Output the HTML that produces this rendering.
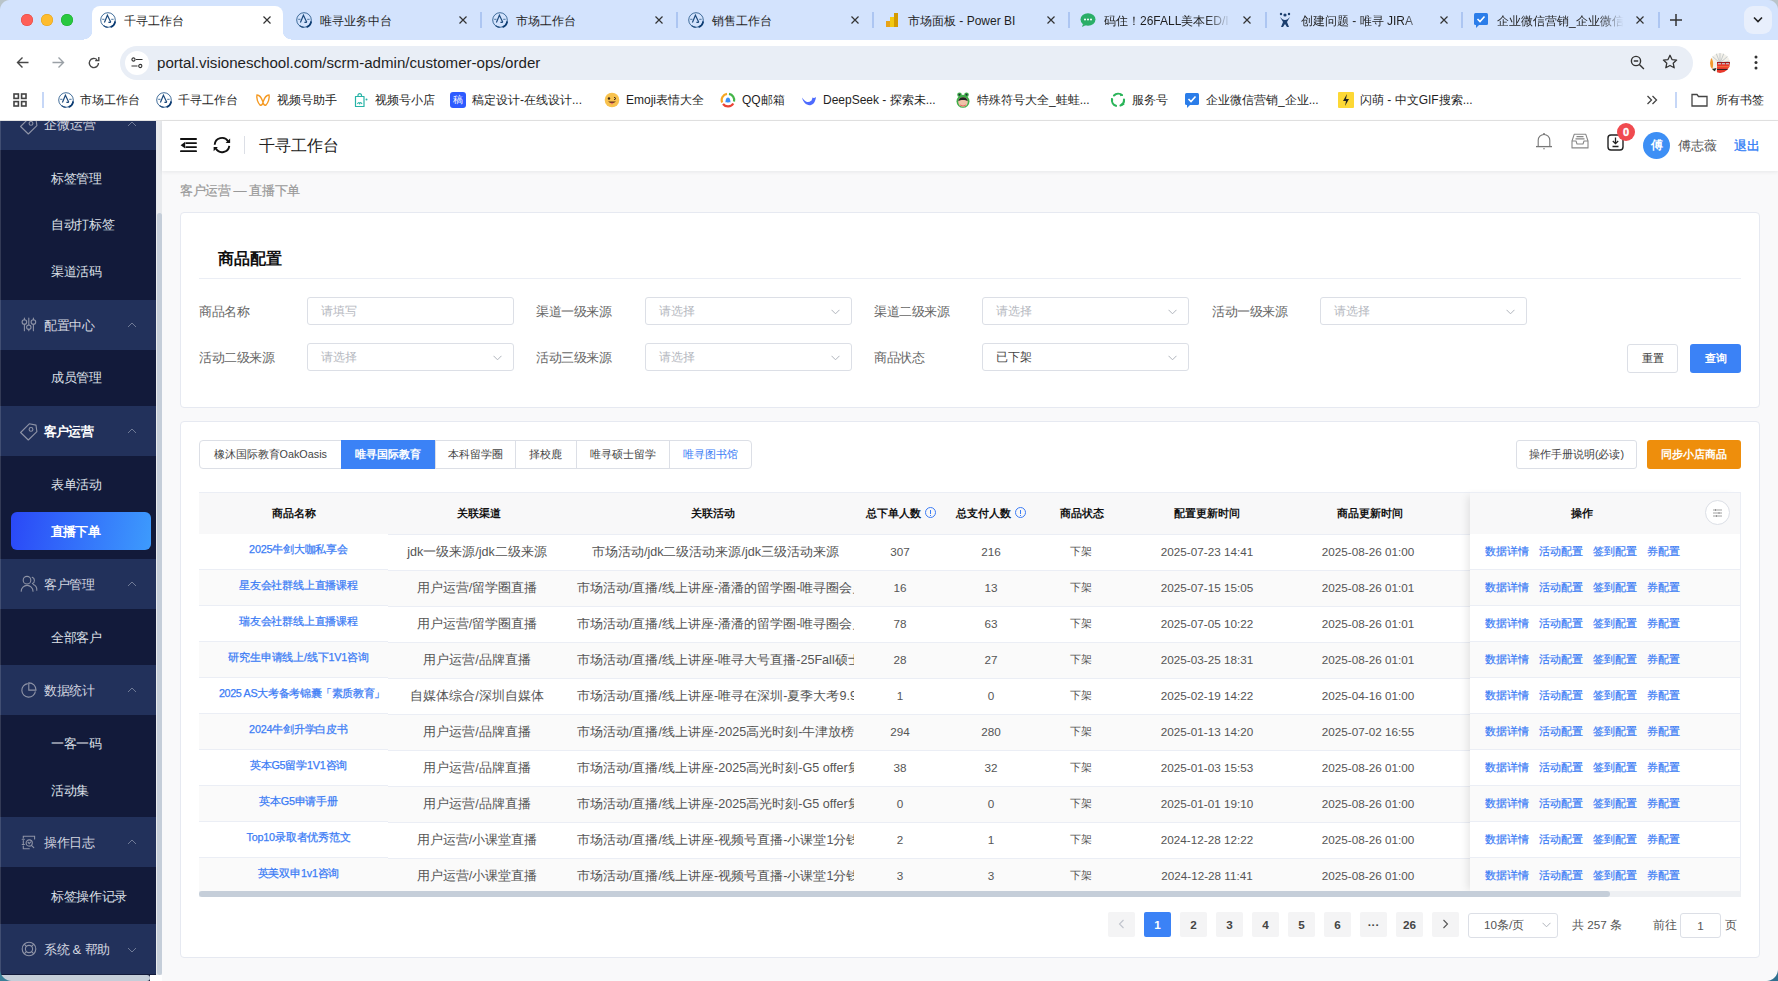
<!DOCTYPE html><html><head><meta charset="utf-8"><style>
*{box-sizing:border-box;margin:0;padding:0}
html,body{width:1778px;height:981px;overflow:hidden;background:#fff;font-family:"Liberation Sans",sans-serif;}
.a{position:absolute}
.t{position:absolute;white-space:nowrap;line-height:1}
</style></head><body>
<div class="a" style="left:0;top:0;width:1778px;height:40px;background:#d3e3fd"></div>
<div class="a" style="left:0;top:40px;width:1778px;height:80px;background:#fff"></div>
<div class="a" style="left:21px;top:14px;width:12px;height:12px;border-radius:50%;background:#fe5f57;box-shadow:inset 0 0 0 0.5px #e2463f"></div>
<div class="a" style="left:41px;top:14px;width:12px;height:12px;border-radius:50%;background:#febc2e;box-shadow:inset 0 0 0 0.5px #e1a116"></div>
<div class="a" style="left:61px;top:14px;width:12px;height:12px;border-radius:50%;background:#28c840;box-shadow:inset 0 0 0 0.5px #1aab29"></div>
<div class="a" style="left:92px;top:6px;width:191px;height:34px;background:#fff;border-radius:8px 8px 0 0"></div>
<div class="a" style="left:84px;top:31px;width:8px;height:9px;background:radial-gradient(circle at 0 0,#d3e3fd 8px,#fff 8.5px)"></div>
<div class="a" style="left:283px;top:31px;width:8px;height:9px;background:radial-gradient(circle at 100% 0,#d3e3fd 8px,#fff 8.5px)"></div>
<svg class="a" style="left:100px;top:12px" width="16" height="16" viewBox="0 0 16 16"><circle cx="8" cy="8" r="7.3" fill="none" stroke="#2f5f90" stroke-width="0.9"/><path d="M15.2 9.3A7.3 7.3 0 0 1 10.6 15.1" fill="none" stroke="#0b3b72" stroke-width="1.8"/><path d="M3.6 13.6A7.3 7.3 0 0 0 7.6 15.4" fill="none" stroke="#1d4a7c" stroke-width="1.2"/><path d="M4.4 10.4L7.4 3.2L10.8 10.3M8.4 10.3h2.4" fill="none" stroke="#1d4a7c" stroke-width="1.2"/><path d="M2.2 7.3h2.3M11.2 7.3h2.4" stroke="#4d76a0" stroke-width="1"/></svg>
<div class="t" style="left:124px;top:15px;font-size:12px;color:#1f1f1f">千寻工作台</div>
<svg class="a" style="left:263px;top:16px" width="8" height="8" viewBox="0 0 8 8"><path d="M0.5 0.5l7 7M7.5 0.5l-7 7" stroke="#333" stroke-width="1.2"/></svg>
<svg class="a" style="left:296px;top:12px" width="16" height="16" viewBox="0 0 16 16"><circle cx="8" cy="8" r="7.3" fill="none" stroke="#2f5f90" stroke-width="0.9"/><path d="M15.2 9.3A7.3 7.3 0 0 1 10.6 15.1" fill="none" stroke="#0b3b72" stroke-width="1.8"/><path d="M3.6 13.6A7.3 7.3 0 0 0 7.6 15.4" fill="none" stroke="#1d4a7c" stroke-width="1.2"/><path d="M4.4 10.4L7.4 3.2L10.8 10.3M8.4 10.3h2.4" fill="none" stroke="#1d4a7c" stroke-width="1.2"/><path d="M2.2 7.3h2.3M11.2 7.3h2.4" stroke="#4d76a0" stroke-width="1"/></svg>
<div class="t" style="left:320px;top:15px;font-size:12px;color:#1f1f1f">唯寻业务中台</div>
<svg class="a" style="left:459px;top:16px" width="8" height="8" viewBox="0 0 8 8"><path d="M0.5 0.5l7 7M7.5 0.5l-7 7" stroke="#333" stroke-width="1.2"/></svg>
<svg class="a" style="left:492px;top:12px" width="16" height="16" viewBox="0 0 16 16"><circle cx="8" cy="8" r="7.3" fill="none" stroke="#2f5f90" stroke-width="0.9"/><path d="M15.2 9.3A7.3 7.3 0 0 1 10.6 15.1" fill="none" stroke="#0b3b72" stroke-width="1.8"/><path d="M3.6 13.6A7.3 7.3 0 0 0 7.6 15.4" fill="none" stroke="#1d4a7c" stroke-width="1.2"/><path d="M4.4 10.4L7.4 3.2L10.8 10.3M8.4 10.3h2.4" fill="none" stroke="#1d4a7c" stroke-width="1.2"/><path d="M2.2 7.3h2.3M11.2 7.3h2.4" stroke="#4d76a0" stroke-width="1"/></svg>
<div class="t" style="left:516px;top:15px;font-size:12px;color:#1f1f1f">市场工作台</div>
<svg class="a" style="left:655px;top:16px" width="8" height="8" viewBox="0 0 8 8"><path d="M0.5 0.5l7 7M7.5 0.5l-7 7" stroke="#333" stroke-width="1.2"/></svg>
<div class="a" style="left:480px;top:12px;width:2px;height:16px;background:#adc6f2"></div>
<svg class="a" style="left:688px;top:12px" width="16" height="16" viewBox="0 0 16 16"><circle cx="8" cy="8" r="7.3" fill="none" stroke="#2f5f90" stroke-width="0.9"/><path d="M15.2 9.3A7.3 7.3 0 0 1 10.6 15.1" fill="none" stroke="#0b3b72" stroke-width="1.8"/><path d="M3.6 13.6A7.3 7.3 0 0 0 7.6 15.4" fill="none" stroke="#1d4a7c" stroke-width="1.2"/><path d="M4.4 10.4L7.4 3.2L10.8 10.3M8.4 10.3h2.4" fill="none" stroke="#1d4a7c" stroke-width="1.2"/><path d="M2.2 7.3h2.3M11.2 7.3h2.4" stroke="#4d76a0" stroke-width="1"/></svg>
<div class="t" style="left:712px;top:15px;font-size:12px;color:#1f1f1f">销售工作台</div>
<svg class="a" style="left:851px;top:16px" width="8" height="8" viewBox="0 0 8 8"><path d="M0.5 0.5l7 7M7.5 0.5l-7 7" stroke="#333" stroke-width="1.2"/></svg>
<div class="a" style="left:676px;top:12px;width:2px;height:16px;background:#adc6f2"></div>
<svg class="a" style="left:884px;top:12px" width="16" height="16" viewBox="0 0 16 16"><rect x="2" y="9" width="4" height="6" fill="#e8a317"/><rect x="6" y="5" width="4" height="10" fill="#f2c811"/><rect x="10" y="1" width="4" height="14" fill="#d49a00"/></svg>
<div class="t" style="left:908px;top:15px;font-size:12px;color:#1f1f1f">市场面板 - Power BI</div>
<svg class="a" style="left:1047px;top:16px" width="8" height="8" viewBox="0 0 8 8"><path d="M0.5 0.5l7 7M7.5 0.5l-7 7" stroke="#333" stroke-width="1.2"/></svg>
<div class="a" style="left:872px;top:12px;width:2px;height:16px;background:#adc6f2"></div>
<svg class="a" style="left:1080px;top:12px" width="16" height="16" viewBox="0 0 16 16"><ellipse cx="8" cy="7.5" rx="7.5" ry="6.2" fill="#2aae67"/><path d="M3 12l-1 3 4-2z" fill="#2aae67"/><circle cx="5" cy="7.5" r="1" fill="#fff"/><circle cx="8" cy="7.5" r="1" fill="#fff"/><circle cx="11" cy="7.5" r="1" fill="#fff"/></svg>
<div class="t" style="left:1104px;top:15px;width:127px;overflow:hidden;padding-bottom:3px;font-size:12px;color:#1f1f1f;-webkit-mask-image:linear-gradient(90deg,#000 80%,transparent)">码住！26FALL美本ED/I</div>
<svg class="a" style="left:1243px;top:16px" width="8" height="8" viewBox="0 0 8 8"><path d="M0.5 0.5l7 7M7.5 0.5l-7 7" stroke="#333" stroke-width="1.2"/></svg>
<div class="a" style="left:1068px;top:12px;width:2px;height:16px;background:#adc6f2"></div>
<svg class="a" style="left:1277px;top:12px" width="16" height="16" viewBox="0 0 16 16"><circle cx="8" cy="3" r="1.6" fill="#1c3f6e"/><circle cx="4" cy="2" r="1.2" fill="#1c3f6e"/><circle cx="12" cy="2" r="1.2" fill="#1c3f6e"/><path d="M3 5c2 2 3 3 5 3s3-1 5-3l-3 5 2 5H10l-2-3-2 3H4l2-5z" fill="#1c3f6e"/></svg>
<div class="t" style="left:1301px;top:15px;width:127px;overflow:hidden;padding-bottom:3px;font-size:12px;color:#1f1f1f;-webkit-mask-image:linear-gradient(90deg,#000 80%,transparent)">创建问题 - 唯寻 JIRA</div>
<svg class="a" style="left:1440px;top:16px" width="8" height="8" viewBox="0 0 8 8"><path d="M0.5 0.5l7 7M7.5 0.5l-7 7" stroke="#333" stroke-width="1.2"/></svg>
<div class="a" style="left:1265px;top:12px;width:2px;height:16px;background:#adc6f2"></div>
<svg class="a" style="left:1473px;top:12px" width="16" height="16" viewBox="0 0 16 16"><rect x="1" y="1" width="14" height="12" rx="1.5" fill="#2b7de9"/><path d="M3 13l0 3 3-3z" fill="#2b7de9"/><path d="M4.5 7l2.5 2.5 4.5-5" stroke="#fff" stroke-width="1.6" fill="none"/></svg>
<div class="t" style="left:1497px;top:15px;width:127px;overflow:hidden;padding-bottom:3px;font-size:12px;color:#1f1f1f;-webkit-mask-image:linear-gradient(90deg,#000 80%,transparent)">企业微信营销_企业微信</div>
<svg class="a" style="left:1636px;top:16px" width="8" height="8" viewBox="0 0 8 8"><path d="M0.5 0.5l7 7M7.5 0.5l-7 7" stroke="#333" stroke-width="1.2"/></svg>
<div class="a" style="left:1461px;top:12px;width:2px;height:16px;background:#adc6f2"></div>
<div class="a" style="left:1658px;top:12px;width:2px;height:16px;background:#adc6f2"></div>
<svg class="a" style="left:1669px;top:13px" width="14" height="14" viewBox="0 0 14 14"><path d="M7 1v12M1 7h12" stroke="#333" stroke-width="1.5"/></svg>
<div class="a" style="left:1744px;top:6px;width:28px;height:28px;border-radius:9px;background:#e8effc"></div>
<svg class="a" style="left:1753px;top:16px" width="10" height="8" viewBox="0 0 10 8"><path d="M1 1.5l4 4 4-4" stroke="#222" stroke-width="1.6" fill="none"/></svg>
<svg class="a" style="left:16px;top:56px" width="13" height="13" viewBox="0 0 13 13"><path d="M12.5 6.5H1.5M6.5 1.5l-5 5 5 5" stroke="#474747" stroke-width="1.4" fill="none"/></svg>
<svg class="a" style="left:52px;top:56px" width="13" height="13" viewBox="0 0 13 13"><path d="M0.5 6.5h11M6.5 1.5l5 5-5 5" stroke="#9aa0a6" stroke-width="1.4" fill="none"/></svg>
<svg class="a" style="left:87px;top:56px" width="14" height="14" viewBox="0 0 14 14"><path d="M11.5 7a4.6 4.6 0 1 1-1.4-3.3" stroke="#474747" stroke-width="1.4" fill="none"/><path d="M11.8 1v3.6H8.2" stroke="#474747" stroke-width="1.4" fill="none"/></svg>
<div class="a" style="left:120px;top:46px;width:1573px;height:34px;border-radius:17px;background:#e9eef6"></div>
<div class="a" style="left:125px;top:51px;width:24px;height:24px;border-radius:50%;background:#fff"></div>
<svg class="a" style="left:131px;top:57px" width="12" height="12" viewBox="0 0 12 12"><circle cx="2.5" cy="2.5" r="1.6" fill="none" stroke="#333" stroke-width="1.1"/><path d="M5 2.5h6.5M0.5 9h6" stroke="#333" stroke-width="1.2"/><circle cx="9.3" cy="9" r="1.6" fill="none" stroke="#333" stroke-width="1.1"/></svg>
<div class="t" style="left:157px;top:55px;font-size:15.1px;color:#1f1f1f">portal.visioneschool.com/scrm-admin/customer-ops/order</div>
<svg class="a" style="left:1630px;top:55px" width="15" height="15" viewBox="0 0 15 15"><circle cx="6" cy="6" r="4.6" fill="none" stroke="#333" stroke-width="1.4"/><path d="M9.4 9.4l4.5 4.5M3.8 6h4.4" stroke="#333" stroke-width="1.4"/></svg>
<svg class="a" style="left:1662px;top:54px" width="16" height="16" viewBox="0 0 16 16"><path d="M8 1.3l2 4.3 4.6.5-3.4 3.1 1 4.6L8 11.5l-4.2 2.3 1-4.6L1.4 6.1 6 5.6z" fill="none" stroke="#333" stroke-width="1.3" stroke-linejoin="round"/></svg>
<svg class="a" style="left:1710px;top:53px" width="20" height="20" viewBox="0 0 20 20"><defs><clipPath id="av"><circle cx="10" cy="10" r="10"/></clipPath></defs><g clip-path="url(#av)"><rect width="20" height="20" fill="#f3f1ea"/><g stroke="#b9c0c4" stroke-width="0.8"><path d="M10 10L6 0M10 10L10 0M10 10L14 0M10 10L18 3M10 10L20 8M10 10L2 3"/></g><path d="M0 4C4 6 4 14 1 19L-1 19z" fill="#f29a2e"/><path d="M6.5 15L4 20H0L2 16z" fill="#1d2a1f"/><rect x="7" y="9" width="13" height="11" fill="#e8392c"/><rect x="7" y="9" width="13" height="1.3" fill="#9b1c1c"/><path d="M8 10.8h3M12 10.8h3M16 10.8h3" stroke="#bfe1f0" stroke-width="1.1"/><rect x="7" y="13" width="13" height="1.3" fill="#f26b3a"/><path d="M7 16.5h12" stroke="#3a1e1e" stroke-width="1.2"/></g></svg>
<svg class="a" style="left:1754px;top:55px" width="4" height="15" viewBox="0 0 4 15"><circle cx="2" cy="2" r="1.5" fill="#333"/><circle cx="2" cy="7.5" r="1.5" fill="#333"/><circle cx="2" cy="13" r="1.5" fill="#333"/></svg>
<svg class="a" style="left:13px;top:93px" width="14" height="14" viewBox="0 0 14 14"><g fill="none" stroke="#444" stroke-width="1.6"><rect x="1" y="1" width="4.4" height="4.4"/><rect x="8.6" y="1" width="4.4" height="4.4"/><rect x="1" y="8.6" width="4.4" height="4.4"/><rect x="8.6" y="8.6" width="4.4" height="4.4"/></g></svg>
<div class="a" style="left:42px;top:92px;width:2px;height:16px;background:#c6d7f7"></div>
<svg class="a" style="left:58px;top:92px" width="16" height="16" viewBox="0 0 16 16"><circle cx="8" cy="8" r="7.3" fill="none" stroke="#2f5f90" stroke-width="0.9"/><path d="M15.2 9.3A7.3 7.3 0 0 1 10.6 15.1" fill="none" stroke="#0b3b72" stroke-width="1.8"/><path d="M3.6 13.6A7.3 7.3 0 0 0 7.6 15.4" fill="none" stroke="#1d4a7c" stroke-width="1.2"/><path d="M4.4 10.4L7.4 3.2L10.8 10.3M8.4 10.3h2.4" fill="none" stroke="#1d4a7c" stroke-width="1.2"/><path d="M2.2 7.3h2.3M11.2 7.3h2.4" stroke="#4d76a0" stroke-width="1"/></svg>
<div class="t" style="left:80px;top:94px;font-size:12px;color:#1f1f1f">市场工作台</div>
<svg class="a" style="left:156px;top:92px" width="16" height="16" viewBox="0 0 16 16"><circle cx="8" cy="8" r="7.3" fill="none" stroke="#2f5f90" stroke-width="0.9"/><path d="M15.2 9.3A7.3 7.3 0 0 1 10.6 15.1" fill="none" stroke="#0b3b72" stroke-width="1.8"/><path d="M3.6 13.6A7.3 7.3 0 0 0 7.6 15.4" fill="none" stroke="#1d4a7c" stroke-width="1.2"/><path d="M4.4 10.4L7.4 3.2L10.8 10.3M8.4 10.3h2.4" fill="none" stroke="#1d4a7c" stroke-width="1.2"/><path d="M2.2 7.3h2.3M11.2 7.3h2.4" stroke="#4d76a0" stroke-width="1"/></svg>
<div class="t" style="left:178px;top:94px;font-size:12px;color:#1f1f1f">千寻工作台</div>
<svg class="a" style="left:255px;top:92px" width="16" height="16" viewBox="0 0 16 16"><path d="M2 3c3 0 5 4 6 7 1-3 3-7 6-7 1 3-1 8-3 10-2 1-3-2-3-3 0 1-1 4-3 3C3 11 1 6 2 3z" fill="none" stroke="#f59a23" stroke-width="1.4"/></svg>
<div class="t" style="left:277px;top:94px;font-size:12px;color:#1f1f1f">视频号助手</div>
<svg class="a" style="left:353px;top:92px" width="16" height="16" viewBox="0 0 16 16"><g fill="none" stroke="#27b3a6" stroke-width="1.2" stroke-linejoin="round"><path d="M2.5 4.5h8.5v10H2.5z"/><path d="M5 4.5V3a1.8 1.8 0 0 1 3.5 0v1.5"/><path d="M4.5 12c1-2 2-2 2.2 0 .3-2 1.3-2 2.3 0"/></g><circle cx="13.5" cy="7.5" r="1" fill="#27b3a6"/></svg>
<div class="t" style="left:375px;top:94px;font-size:12px;color:#1f1f1f">视频号小店</div>
<div class="a" style="left:450px;top:92px;width:16px;height:16px;border-radius:3px;background:#2e5bff;color:#fff;font-size:10px;line-height:16px;text-align:center">稿</div>
<div class="t" style="left:472px;top:94px;font-size:12px;color:#1f1f1f">稿定设计-在线设计...</div>
<svg class="a" style="left:604px;top:92px" width="16" height="16" viewBox="0 0 16 16"><circle cx="8" cy="8" r="7.3" fill="#f8c24e"/><circle cx="5" cy="6.5" r="1.2" fill="#3b2a1a"/><path d="M10 5.2l2 1.3-2 1.3" stroke="#3b2a1a" stroke-width="1" fill="none"/><path d="M4 9.5q4 3.5 8 0z" fill="#5a2a1a"/><path d="M6.5 10.8q1.5 3 3 0z" fill="#f2706e"/></svg>
<div class="t" style="left:626px;top:94px;font-size:12px;color:#1f1f1f">Emoji表情大全</div>
<svg class="a" style="left:720px;top:92px" width="16" height="16" viewBox="0 0 16 16"><g fill="none" stroke-width="2.2"><path d="M2.2 10.5A6.3 6.3 0 0 1 7 1.8" stroke="#f6a623"/><path d="M9 1.8A6.3 6.3 0 0 1 14 9.5" stroke="#44b549"/><path d="M13.3 11.5A6.3 6.3 0 0 1 3 12" stroke="#ea4335"/></g><path d="M5.5 10.5c0-2 .5-5 2.5-5s2.5 3 2.5 5c-.8-.4-1.5-.2-2.5 .2-1-.4-1.7-.6-2.5-.2z" fill="#3b8ff5"/></svg>
<div class="t" style="left:742px;top:94px;font-size:12px;color:#1f1f1f">QQ邮箱</div>
<svg class="a" style="left:801px;top:92px" width="16" height="16" viewBox="0 0 16 16"><path d="M1 5.5c1 5 5 8.5 9 7.5 3-.8 4.5-4 5-8-1.2 1-2.5 1.2-3.5 .5-.3 3-2.5 5-5.5 4.5C4 9.5 2.5 7.5 1 5.5z" fill="#4d6bfe"/><path d="M6.5 6.5c1 1.5 2.5 2 4 1.5" stroke="#fff" stroke-width="1" fill="none"/></svg>
<div class="t" style="left:823px;top:94px;font-size:12px;color:#1f1f1f">DeepSeek - 探索未...</div>
<svg class="a" style="left:955px;top:92px" width="16" height="16" viewBox="0 0 16 16"><circle cx="4.5" cy="2.8" r="2.3" fill="#3fae49"/><circle cx="11.5" cy="2.8" r="2.3" fill="#3fae49"/><circle cx="4.5" cy="2.8" r="1" fill="#1e2a3a"/><circle cx="11.5" cy="2.8" r="1" fill="#1e2a3a"/><circle cx="8" cy="9.3" r="6.5" fill="#3fae49"/><circle cx="8" cy="10" r="4.8" fill="#f0c2a8"/><path d="M3.3 9a4.8 4.8 0 0 1 9.4 0c-2-1.5-7.4-1.5-9.4 0z" fill="#222"/><path d="M5 13q3 2 6 0" stroke="#e86a6a" stroke-width="1" fill="none"/></svg>
<div class="t" style="left:977px;top:94px;font-size:12px;color:#1f1f1f">特殊符号大全_蛙蛙...</div>
<svg class="a" style="left:1110px;top:92px" width="16" height="16" viewBox="0 0 16 16"><g fill="none" stroke="#2bb55a" stroke-width="2.1" stroke-linecap="round"><path d="M4 3.5A6 6 0 0 1 12 3"/><path d="M14 7.5A6 6 0 0 1 10.5 13.5"/><path d="M6 13.8A6 6 0 0 1 2 7"/></g><path d="M10.5 1l2.5 2.5-3 .8z M14.8 12.5l-3.3 1.5.2-3z M1 9.5l.2-3.5 2.3 2z" fill="#2bb55a"/></svg>
<div class="t" style="left:1132px;top:94px;font-size:12px;color:#1f1f1f">服务号</div>
<svg class="a" style="left:1184px;top:92px" width="16" height="16" viewBox="0 0 16 16"><rect x="1" y="1" width="14" height="12" rx="1.5" fill="#2b7de9"/><path d="M3 13l0 3 3-3z" fill="#2b7de9"/><path d="M4.5 7l2.5 2.5 4.5-5" stroke="#fff" stroke-width="1.6" fill="none"/></svg>
<div class="t" style="left:1206px;top:94px;font-size:12px;color:#1f1f1f">企业微信营销_企业...</div>
<svg class="a" style="left:1338px;top:92px" width="16" height="16" viewBox="0 0 16 16"><rect width="16" height="16" rx="1" fill="#fdd835"/><path d="M9 2L5 9h3l-1 5 4-7H8z" fill="#222"/></svg>
<div class="t" style="left:1360px;top:94px;font-size:12px;color:#1f1f1f">闪萌 - 中文GIF搜索...</div>
<svg class="a" style="left:1646px;top:94px" width="12" height="12" viewBox="0 0 12 12"><path d="M1.5 2l4 4-4 4M6.5 2l4 4-4 4" stroke="#444" stroke-width="1.3" fill="none"/></svg>
<div class="a" style="left:1675px;top:92px;width:2px;height:16px;background:#c6d7f7"></div>
<svg class="a" style="left:1691px;top:93px" width="17" height="14" viewBox="0 0 17 14"><path d="M1 1.5h5l1.5 2H16v9.5H1z" fill="none" stroke="#444" stroke-width="1.3"/></svg>
<div class="t" style="left:1716px;top:94px;font-size:12px;color:#1f1f1f">所有书签</div>
<div class="a" style="left:0;top:120px;width:1778px;height:1px;background:#e3e3e3"></div>
<div class="a" style="left:0;top:121px;width:156px;height:860px;background:#121a3a"></div>
<div class="a" style="left:156px;top:121px;width:6px;height:860px;background:#e8eaed"></div>
<div class="a" style="left:157px;top:213px;width:5px;height:762px;background:#c5ced9;border-radius:3px"></div>
<div class="a" style="left:0;top:975px;width:150px;height:6px;background:#c5ced9;border-radius:0 3px 3px 0"></div>
<div class="a" style="left:150px;top:975px;width:12px;height:6px;background:#fff"></div>
<div class="a" style="left:0;top:121px;width:156px;height:29px;background:#22315b;overflow:hidden"><div class="t" style="left:44px;top:-3px;font-size:13px;color:#d4d7e0">企微运营</div><svg class="a" style="left:20px;top:-5px" width="18" height="19" viewBox="0 0 18 19"><path d="M0.6 10.5L9.3 1.8L16 3.1L16.9 9.6L8.3 18z" fill="none" stroke="#8e93a6" stroke-width="1.1" stroke-linejoin="round"/><circle cx="11" cy="7.4" r="1.9" fill="none" stroke="#8e93a6" stroke-width="1.1"/></svg><svg class="a" style="left:127px;top:0px" width="10" height="6" viewBox="0 0 10 6"><path d="M1 5l4-4 4 4" stroke="#6f7a96" stroke-width="1" fill="none"/></svg></div>
<div class="t" style="left:51px;top:172px;font-size:13px;letter-spacing:-0.35px;color:#dde0e8">标签管理</div>
<div class="t" style="left:51px;top:218px;font-size:13px;letter-spacing:-0.35px;color:#dde0e8">自动打标签</div>
<div class="t" style="left:51px;top:265px;font-size:13px;letter-spacing:-0.35px;color:#dde0e8">渠道活码</div>
<div class="a" style="left:0;top:300px;width:156px;height:50px;background:#22315b"></div>
<div class="t" style="left:44px;top:319px;font-size:13px;letter-spacing:-0.5px;color:#d4d7e0;font-weight:normal">配置中心</div>
<svg class="a" style="left:20px;top:316px" width="18" height="17" viewBox="0 0 18 17"><g fill="none" stroke="#8e93a6" stroke-width="1.1" stroke-linecap="round"><path d="M4.4 2.1v1.6M4.4 8.3v6.5M8.8 2.1v6.8M8.8 13.4v1.4M13.4 2.1v1.6M13.4 8.3v6.5"/><circle cx="4.4" cy="6" r="2.3"/><circle cx="8.8" cy="11.2" r="2.2"/><circle cx="13.4" cy="6" r="2.3"/></g></svg>
<svg class="a" style="left:127px;top:322px" width="10" height="6" viewBox="0 0 10 6"><path d="M1 5l4-4 4 4" stroke="#6f7a96" stroke-width="1" fill="none"/></svg>
<div class="t" style="left:51px;top:371px;font-size:13px;letter-spacing:-0.35px;color:#dde0e8">成员管理</div>
<div class="a" style="left:0;top:406px;width:156px;height:50px;background:#22315b"></div>
<div class="t" style="left:44px;top:425px;font-size:13px;letter-spacing:-0.8px;color:#fff;font-weight:bold">客户运营</div>
<svg class="a" style="left:20px;top:422px" width="18" height="19" viewBox="0 0 18 19"><path d="M0.6 10.5L9.3 1.8L16 3.1L16.9 9.6L8.3 18z" fill="none" stroke="#8e93a6" stroke-width="1.1" stroke-linejoin="round"/><circle cx="11" cy="7.4" r="1.9" fill="none" stroke="#8e93a6" stroke-width="1.1"/></svg>
<svg class="a" style="left:127px;top:428px" width="10" height="6" viewBox="0 0 10 6"><path d="M1 5l4-4 4 4" stroke="#6f7a96" stroke-width="1" fill="none"/></svg>
<div class="t" style="left:51px;top:478px;font-size:13px;letter-spacing:-0.35px;color:#dde0e8">表单活动</div>
<div class="a" style="left:11px;top:512px;width:140px;height:38px;border-radius:6px;background:linear-gradient(100deg,#2a48f7,#3d9bfd)"></div>
<div class="t" style="left:51px;top:525px;font-size:13px;letter-spacing:-0.8px;color:#fff;font-weight:bold">直播下单</div>
<div class="a" style="left:0;top:559px;width:156px;height:50px;background:#22315b"></div>
<div class="t" style="left:44px;top:578px;font-size:13px;letter-spacing:-0.5px;color:#d4d7e0;font-weight:normal">客户管理</div>
<svg class="a" style="left:20px;top:575px" width="18" height="17" viewBox="0 0 18 17"><g fill="none" stroke="#8e93a6" stroke-width="1.1" stroke-linecap="round"><circle cx="7" cy="5.2" r="3.8"/><path d="M1.2 16.3A5.9 5.9 0 0 1 13 16.3"/><path d="M12.2 2.3A3.4 3.4 0 0 1 12.4 8.6"/><path d="M13.3 9.6A5.6 5.6 0 0 1 16.8 15.3"/></g></svg>
<svg class="a" style="left:127px;top:581px" width="10" height="6" viewBox="0 0 10 6"><path d="M1 5l4-4 4 4" stroke="#6f7a96" stroke-width="1" fill="none"/></svg>
<div class="t" style="left:51px;top:631px;font-size:13px;letter-spacing:-0.35px;color:#dde0e8">全部客户</div>
<div class="a" style="left:0;top:665px;width:156px;height:50px;background:#22315b"></div>
<div class="t" style="left:44px;top:684px;font-size:13px;letter-spacing:-0.5px;color:#d4d7e0;font-weight:normal">数据统计</div>
<svg class="a" style="left:20px;top:681px" width="18" height="18" viewBox="0 0 18 18"><g fill="none" stroke="#8e93a6" stroke-width="1.1"><path d="M7.8 2.6A6.8 6.8 0 1 0 15.4 10.3"/><path d="M8.8 1.9V9.1H16A7.1 7.1 0 0 0 8.8 1.9z"/></g></svg>
<svg class="a" style="left:127px;top:687px" width="10" height="6" viewBox="0 0 10 6"><path d="M1 5l4-4 4 4" stroke="#6f7a96" stroke-width="1" fill="none"/></svg>
<div class="t" style="left:51px;top:737px;font-size:13px;letter-spacing:-0.35px;color:#dde0e8">一客一码</div>
<div class="t" style="left:51px;top:784px;font-size:13px;letter-spacing:-0.35px;color:#dde0e8">活动集</div>
<div class="a" style="left:0;top:817px;width:156px;height:50px;background:#22315b"></div>
<div class="t" style="left:44px;top:836px;font-size:13px;letter-spacing:-0.5px;color:#d4d7e0;font-weight:normal">操作日志</div>
<svg class="a" style="left:20px;top:calc(833px + 2px)" width="16" height="16" viewBox="0 0 16 16"><g fill="none" stroke="#8e93a6" stroke-width="1.1" stroke-linecap="round"><path d="M3.3 3V1.2h11.3V4M3.3 5.5v3M3.3 11v2.8h6"/><path d="M2.2 4.2h2.2M2.2 9.5h2.2"/><circle cx="9.2" cy="8" r="3.1"/><path d="M11.4 10.3l2.4 2.4"/><path d="M8 7.2l1.2 1.4 1.4-1.6"/></g></svg>
<svg class="a" style="left:127px;top:839px" width="10" height="6" viewBox="0 0 10 6"><path d="M1 5l4-4 4 4" stroke="#6f7a96" stroke-width="1" fill="none"/></svg>
<div class="t" style="left:51px;top:890px;font-size:13px;letter-spacing:-0.35px;color:#dde0e8">标签操作记录</div>
<div class="a" style="left:0;top:924px;width:156px;height:50px;background:#22315b"></div>
<div class="t" style="left:44px;top:943px;font-size:13px;letter-spacing:-0.5px;color:#d4d7e0;font-weight:normal">系统<span style="letter-spacing:0"> &amp; </span>帮助</div>
<svg class="a" style="left:21px;top:calc(940px + 1px)" width="16" height="16" viewBox="0 0 16 16"><g fill="none" stroke="#8e93a6" stroke-width="1.1"><circle cx="8" cy="8" r="6.8"/><circle cx="8" cy="8" r="3.6"/><path d="M3.2 3.2l2.3 2.3M12.8 3.2l-2.3 2.3M3.2 12.8l2.3-2.3M12.8 12.8l-2.3-2.3"/></g></svg>
<svg class="a" style="left:127px;top:947px" width="10" height="6" viewBox="0 0 10 6"><path d="M1 1l4 4 4-4" stroke="#6f7a96" stroke-width="1" fill="none"/></svg>
<div class="a" style="left:162px;top:121px;width:1616px;height:860px;background:#f9f9fa"></div>
<div class="a" style="left:162px;top:121px;width:1616px;height:50px;background:#fff;box-shadow:0 1px 4px rgba(0,21,41,.08)"></div>
<svg class="a" style="left:180px;top:137px" width="17" height="16" viewBox="0 0 17 16"><path d="M0.9 2h15.2M6.2 6.1h9.9M6.2 10.1h9.9M0.9 14.2h15.2" stroke="#111" stroke-width="1.8" stroke-linecap="round"/><path d="M0.6 8.2L5.2 4.8v6.8z" fill="#111"/></svg>
<svg class="a" style="left:212.7px;top:136px" width="18" height="18" viewBox="0 0 18 18"><path d="M1.7 8.8A7.3 7.3 0 0 1 15.2 5.4M16.3 9.8A7.3 7.3 0 0 1 2.8 12.6" stroke="#111" stroke-width="1.9" fill="none"/><path d="M12.6 7.1H17.1V2.6z" fill="#111"/><path d="M4.9 10.9H0.6V15.3z" fill="#111"/></svg>
<div class="a" style="left:244px;top:136px;width:1px;height:18px;background:#dcdfe6"></div>
<div class="t" style="left:259px;top:138px;font-size:16px;color:#222">千寻工作台</div>
<svg class="a" style="left:1535px;top:132px" width="18" height="19" viewBox="0 0 18 19"><g fill="none" stroke="#777" stroke-width="1.1"><path d="M3.2 14.5V8.3A5.8 5.8 0 0 1 14.8 8.3V14.5"/><path d="M1 14.6H17" stroke-width="1.3"/><path d="M8.2 16.8h1.6"/></g><circle cx="9" cy="2" r="1" fill="#777"/></svg>
<svg class="a" style="left:1571px;top:133px" width="18" height="16" viewBox="0 0 18 16"><g fill="none" stroke="#888" stroke-width="1.1" stroke-linejoin="round"><path d="M3.2 1.3H14.8L17 8V14.9H1V8z"/><path d="M1 8H5L6 11H12L13 8H17"/><path d="M5.5 3.6H12.5M4.5 5.9H13.5"/></g></svg>
<svg class="a" style="left:1607px;top:134px" width="17" height="17" viewBox="0 0 17 17"><rect x="1" y="1" width="15" height="15" rx="3" fill="none" stroke="#222" stroke-width="1.4"/><path d="M8.5 3.5v6M5.8 7l2.7 2.7L11.2 7M5.5 12.5h6" stroke="#222" stroke-width="1.3" fill="none"/></svg>
<div class="a" style="left:1617px;top:123px;width:18px;height:18px;border-radius:50%;background:#f04a4f;color:#fff;font-size:11px;font-weight:bold;-webkit-text-stroke:0.4px #fff;line-height:18px;text-align:center">0</div>
<div class="a" style="left:1643px;top:132px;width:27px;height:27px;border-radius:50%;background:#3d8ff5;color:#fff;font-size:12px;font-weight:bold;line-height:27px;text-align:center">傅</div>
<div class="t" style="left:1678px;top:139px;font-size:13px;color:#555">傅志薇</div>
<div class="t" style="left:1734px;top:139px;font-size:13px;color:#2f7cf6;-webkit-text-stroke:0.3px #2f7cf6">退出</div>
<div class="t" style="left:180px;top:184px;font-size:13px;letter-spacing:-0.4px;color:#999;-webkit-text-stroke:0.2px #999">客户运营 — 直播下单</div>
<div class="a" style="left:180px;top:212px;width:1580px;height:196px;background:#fff;border:1px solid #e6e9f1;border-radius:4px"></div>
<div class="t" style="left:218px;top:251px;font-size:16px;color:#111;font-weight:bold">商品配置</div>
<div class="a" style="left:199px;top:278px;width:1542px;height:1px;background:#ebeef5"></div>
<div class="t" style="left:199px;top:305px;font-size:13px;letter-spacing:-0.4px;color:#666">商品名称</div>
<div class="a" style="left:307px;top:297px;width:207px;height:28px;border:1px solid #dcdfe6;border-radius:3px;background:#fff"></div>
<div class="t" style="left:321px;top:305px;font-size:12px;color:#b5b8c0">请填写</div>
<div class="t" style="left:536px;top:305px;font-size:13px;letter-spacing:-0.4px;color:#666">渠道一级来源</div>
<div class="a" style="left:645px;top:297px;width:207px;height:28px;border:1px solid #dcdfe6;border-radius:3px;background:#fff"></div>
<div class="t" style="left:659px;top:305px;font-size:12px;color:#b5b8c0">请选择</div>
<svg class="a" style="left:831px;top:309px" width="9" height="6" viewBox="0 0 9 6"><path d="M0.5 0.8l4 4 4-4" stroke="#b0b4bc" stroke-width="1" fill="none"/></svg>
<div class="t" style="left:874px;top:305px;font-size:13px;letter-spacing:-0.4px;color:#666">渠道二级来源</div>
<div class="a" style="left:982px;top:297px;width:207px;height:28px;border:1px solid #dcdfe6;border-radius:3px;background:#fff"></div>
<div class="t" style="left:996px;top:305px;font-size:12px;color:#b5b8c0">请选择</div>
<svg class="a" style="left:1168px;top:309px" width="9" height="6" viewBox="0 0 9 6"><path d="M0.5 0.8l4 4 4-4" stroke="#b0b4bc" stroke-width="1" fill="none"/></svg>
<div class="t" style="left:1212px;top:305px;font-size:13px;letter-spacing:-0.4px;color:#666">活动一级来源</div>
<div class="a" style="left:1320px;top:297px;width:207px;height:28px;border:1px solid #dcdfe6;border-radius:3px;background:#fff"></div>
<div class="t" style="left:1334px;top:305px;font-size:12px;color:#b5b8c0">请选择</div>
<svg class="a" style="left:1506px;top:309px" width="9" height="6" viewBox="0 0 9 6"><path d="M0.5 0.8l4 4 4-4" stroke="#b0b4bc" stroke-width="1" fill="none"/></svg>
<div class="t" style="left:199px;top:351px;font-size:13px;letter-spacing:-0.4px;color:#666">活动二级来源</div>
<div class="a" style="left:307px;top:343px;width:207px;height:28px;border:1px solid #dcdfe6;border-radius:3px;background:#fff"></div>
<div class="t" style="left:321px;top:351px;font-size:12px;color:#b5b8c0">请选择</div>
<svg class="a" style="left:493px;top:355px" width="9" height="6" viewBox="0 0 9 6"><path d="M0.5 0.8l4 4 4-4" stroke="#b0b4bc" stroke-width="1" fill="none"/></svg>
<div class="t" style="left:536px;top:351px;font-size:13px;letter-spacing:-0.4px;color:#666">活动三级来源</div>
<div class="a" style="left:645px;top:343px;width:207px;height:28px;border:1px solid #dcdfe6;border-radius:3px;background:#fff"></div>
<div class="t" style="left:659px;top:351px;font-size:12px;color:#b5b8c0">请选择</div>
<svg class="a" style="left:831px;top:355px" width="9" height="6" viewBox="0 0 9 6"><path d="M0.5 0.8l4 4 4-4" stroke="#b0b4bc" stroke-width="1" fill="none"/></svg>
<div class="t" style="left:874px;top:351px;font-size:13px;letter-spacing:-0.4px;color:#666">商品状态</div>
<div class="a" style="left:982px;top:343px;width:207px;height:28px;border:1px solid #dcdfe6;border-radius:3px;background:#fff"></div>
<div class="t" style="left:996px;top:351px;font-size:12px;color:#444">已下架</div>
<svg class="a" style="left:1168px;top:355px" width="9" height="6" viewBox="0 0 9 6"><path d="M0.5 0.8l4 4 4-4" stroke="#b0b4bc" stroke-width="1" fill="none"/></svg>
<div class="a" style="left:1627px;top:344px;width:51px;height:29px;border:1px solid #dcdfe6;border-radius:3px;background:#fff;font-size:11px;color:#333;line-height:27px;text-align:center">重置</div>
<div class="a" style="left:1690px;top:344px;width:51px;height:29px;border-radius:3px;background:#3b82f6;font-size:11px;color:#fff;font-weight:bold;line-height:29px;text-align:center">查询</div>
<div class="a" style="left:180px;top:421px;width:1580px;height:537px;background:#fff;border:1px solid #e6e9f1;border-radius:4px"></div>
<div class="a" style="left:199px;top:440px;width:553px;height:29px;border:1px solid #dcdfe6;border-radius:4px;background:#fff"></div>
<div class="t" style="left:199.5px;top:449px;width:141.5px;text-align:center;font-size:10.8px;color:#444;font-weight:normal">橡沐国际教育OakOasis</div>
<div class="a" style="left:341px;top:440px;width:94px;height:29px;background:#3b82f6"></div>
<div class="t" style="left:341px;top:449px;width:94px;text-align:center;font-size:10.8px;color:#fff;font-weight:bold">唯寻国际教育</div>
<div class="a" style="left:435px;top:441px;width:1px;height:27px;background:#dcdfe6"></div>
<div class="t" style="left:435px;top:449px;width:80px;text-align:center;font-size:10.8px;color:#444;font-weight:normal">本科留学圈</div>
<div class="a" style="left:515px;top:441px;width:1px;height:27px;background:#dcdfe6"></div>
<div class="t" style="left:515px;top:449px;width:61px;text-align:center;font-size:10.8px;color:#444;font-weight:normal">择校鹿</div>
<div class="a" style="left:576px;top:441px;width:1px;height:27px;background:#dcdfe6"></div>
<div class="t" style="left:576px;top:449px;width:93px;text-align:center;font-size:10.8px;color:#444;font-weight:normal">唯寻硕士留学</div>
<div class="a" style="left:669px;top:441px;width:1px;height:27px;background:#dcdfe6"></div>
<div class="t" style="left:669px;top:449px;width:82.5px;text-align:center;font-size:10.8px;color:#3b7cf5;font-weight:normal">唯寻图书馆</div>
<div class="a" style="left:1516px;top:440px;width:121px;height:29px;border:1px solid #dcdfe6;border-radius:3px;background:#fff;font-size:10.8px;color:#444;line-height:27px;text-align:center">操作手册说明(必读)</div>
<div class="a" style="left:1647px;top:440px;width:94px;height:29px;border-radius:3px;background:#ee8e0c;font-size:10.8px;color:#fff;font-weight:bold;line-height:29px;text-align:center">同步小店商品</div>
<div class="a" style="left:199px;top:492px;width:1542px;height:43px;background:#f8f8f9;border-top:1px solid #ebeef5;border-bottom:1px solid #ebeef5"></div>
<div class="t" style="left:199px;top:508px;width:189px;text-align:center;font-size:10.6px;color:#111;font-weight:bold">商品名称</div>
<div class="t" style="left:389.5px;top:508px;width:178px;text-align:center;font-size:10.6px;color:#111;font-weight:bold">关联渠道</div>
<div class="t" style="left:568.7px;top:508px;width:288px;text-align:center;font-size:10.6px;color:#111;font-weight:bold">关联活动</div>
<div class="t" style="left:855.5px;top:508px;width:90px;text-align:center;font-size:10.6px;color:#111;font-weight:bold">总下单人数<span style="display:inline-block;width:11px;height:11px;border:1px solid #3b7cf5;border-radius:50%;margin-left:4px;vertical-align:-2px;position:relative;top:-1px"><span style="position:absolute;left:4px;top:2px;width:1px;height:4px;background:#3b7cf5"></span><span style="position:absolute;left:4px;top:7px;width:1px;height:1px;background:#3b7cf5"></span></span></div>
<div class="t" style="left:945.5px;top:508px;width:90px;text-align:center;font-size:10.6px;color:#111;font-weight:bold">总支付人数<span style="display:inline-block;width:11px;height:11px;border:1px solid #3b7cf5;border-radius:50%;margin-left:4px;vertical-align:-2px;position:relative;top:-1px"><span style="position:absolute;left:4px;top:2px;width:1px;height:4px;background:#3b7cf5"></span><span style="position:absolute;left:4px;top:7px;width:1px;height:1px;background:#3b7cf5"></span></span></div>
<div class="t" style="left:1036.8px;top:508px;width:90px;text-align:center;font-size:10.6px;color:#111;font-weight:bold">商品状态</div>
<div class="t" style="left:1124px;top:508px;width:166px;text-align:center;font-size:10.6px;color:#111;font-weight:bold">配置更新时间</div>
<div class="t" style="left:1291.8px;top:508px;width:156px;text-align:center;font-size:10.6px;color:#111;font-weight:bold">商品更新时间</div>
<div class="a" style="left:199px;top:535px;width:1542px;height:36px;background:#fff;border-bottom:1px solid #ebeef5"></div>
<div class="t" style="left:388px;top:546px;width:178px;text-align:center;font-size:12.6px;color:#555">jdk一级来源/jdk二级来源</div>
<div class="t" style="left:566px;top:546px;width:288px;overflow:hidden;font-size:12.6px;color:#555;display:flex;justify-content:safe center;padding-left:11px">市场活动/jdk二级活动来源/jdk三级活动来源</div>
<div class="t" style="left:855px;top:546px;width:90px;text-align:center;font-size:11.7px;color:#555">307</div>
<div class="t" style="left:946px;top:546px;width:90px;text-align:center;font-size:11.7px;color:#555">216</div>
<div class="t" style="left:1036px;top:546px;width:90px;text-align:center;font-size:10.8px;color:#555">下架</div>
<div class="t" style="left:1124px;top:546px;width:166px;text-align:center;font-size:11.7px;color:#555">2025-07-23 14:41</div>
<div class="t" style="left:1290px;top:546px;width:156px;text-align:center;font-size:11.7px;color:#555">2025-08-26 01:00</div>
<div class="a" style="left:199px;top:571px;width:1542px;height:36px;background:#fafafa;border-bottom:1px solid #ebeef5"></div>
<div class="t" style="left:388px;top:582px;width:178px;text-align:center;font-size:12.6px;color:#555">用户运营/留学圈直播</div>
<div class="t" style="left:566px;top:582px;width:288px;overflow:hidden;font-size:12.6px;color:#555;display:flex;justify-content:safe center;padding-left:11px">市场活动/直播/线上讲座-潘潘的留学圈-唯寻圈会员</div>
<div class="t" style="left:855px;top:582px;width:90px;text-align:center;font-size:11.7px;color:#555">16</div>
<div class="t" style="left:946px;top:582px;width:90px;text-align:center;font-size:11.7px;color:#555">13</div>
<div class="t" style="left:1036px;top:582px;width:90px;text-align:center;font-size:10.8px;color:#555">下架</div>
<div class="t" style="left:1124px;top:582px;width:166px;text-align:center;font-size:11.7px;color:#555">2025-07-15 15:05</div>
<div class="t" style="left:1290px;top:582px;width:156px;text-align:center;font-size:11.7px;color:#555">2025-08-26 01:01</div>
<div class="a" style="left:199px;top:607px;width:1542px;height:36px;background:#fff;border-bottom:1px solid #ebeef5"></div>
<div class="t" style="left:388px;top:618px;width:178px;text-align:center;font-size:12.6px;color:#555">用户运营/留学圈直播</div>
<div class="t" style="left:566px;top:618px;width:288px;overflow:hidden;font-size:12.6px;color:#555;display:flex;justify-content:safe center;padding-left:11px">市场活动/直播/线上讲座-潘潘的留学圈-唯寻圈会员</div>
<div class="t" style="left:855px;top:618px;width:90px;text-align:center;font-size:11.7px;color:#555">78</div>
<div class="t" style="left:946px;top:618px;width:90px;text-align:center;font-size:11.7px;color:#555">63</div>
<div class="t" style="left:1036px;top:618px;width:90px;text-align:center;font-size:10.8px;color:#555">下架</div>
<div class="t" style="left:1124px;top:618px;width:166px;text-align:center;font-size:11.7px;color:#555">2025-07-05 10:22</div>
<div class="t" style="left:1290px;top:618px;width:156px;text-align:center;font-size:11.7px;color:#555">2025-08-26 01:01</div>
<div class="a" style="left:199px;top:643px;width:1542px;height:36px;background:#fafafa;border-bottom:1px solid #ebeef5"></div>
<div class="t" style="left:388px;top:654px;width:178px;text-align:center;font-size:12.6px;color:#555">用户运营/品牌直播</div>
<div class="t" style="left:566px;top:654px;width:288px;overflow:hidden;font-size:12.6px;color:#555;display:flex;justify-content:safe center;padding-left:11px">市场活动/直播/线上讲座-唯寻大号直播-25Fall硕士申请</div>
<div class="t" style="left:855px;top:654px;width:90px;text-align:center;font-size:11.7px;color:#555">28</div>
<div class="t" style="left:946px;top:654px;width:90px;text-align:center;font-size:11.7px;color:#555">27</div>
<div class="t" style="left:1036px;top:654px;width:90px;text-align:center;font-size:10.8px;color:#555">下架</div>
<div class="t" style="left:1124px;top:654px;width:166px;text-align:center;font-size:11.7px;color:#555">2025-03-25 18:31</div>
<div class="t" style="left:1290px;top:654px;width:156px;text-align:center;font-size:11.7px;color:#555">2025-08-26 01:01</div>
<div class="a" style="left:199px;top:679px;width:1542px;height:36px;background:#fff;border-bottom:1px solid #ebeef5"></div>
<div class="t" style="left:388px;top:690px;width:178px;text-align:center;font-size:12.6px;color:#555">自媒体综合/深圳自媒体</div>
<div class="t" style="left:566px;top:690px;width:288px;overflow:hidden;font-size:12.6px;color:#555;display:flex;justify-content:safe center;padding-left:11px">市场活动/直播/线上讲座-唯寻在深圳-夏季大考9.9</div>
<div class="t" style="left:855px;top:690px;width:90px;text-align:center;font-size:11.7px;color:#555">1</div>
<div class="t" style="left:946px;top:690px;width:90px;text-align:center;font-size:11.7px;color:#555">0</div>
<div class="t" style="left:1036px;top:690px;width:90px;text-align:center;font-size:10.8px;color:#555">下架</div>
<div class="t" style="left:1124px;top:690px;width:166px;text-align:center;font-size:11.7px;color:#555">2025-02-19 14:22</div>
<div class="t" style="left:1290px;top:690px;width:156px;text-align:center;font-size:11.7px;color:#555">2025-04-16 01:00</div>
<div class="a" style="left:199px;top:715px;width:1542px;height:36px;background:#fafafa;border-bottom:1px solid #ebeef5"></div>
<div class="t" style="left:388px;top:726px;width:178px;text-align:center;font-size:12.6px;color:#555">用户运营/品牌直播</div>
<div class="t" style="left:566px;top:726px;width:288px;overflow:hidden;font-size:12.6px;color:#555;display:flex;justify-content:safe center;padding-left:11px">市场活动/直播/线上讲座-2025高光时刻-牛津放榜</div>
<div class="t" style="left:855px;top:726px;width:90px;text-align:center;font-size:11.7px;color:#555">294</div>
<div class="t" style="left:946px;top:726px;width:90px;text-align:center;font-size:11.7px;color:#555">280</div>
<div class="t" style="left:1036px;top:726px;width:90px;text-align:center;font-size:10.8px;color:#555">下架</div>
<div class="t" style="left:1124px;top:726px;width:166px;text-align:center;font-size:11.7px;color:#555">2025-01-13 14:20</div>
<div class="t" style="left:1290px;top:726px;width:156px;text-align:center;font-size:11.7px;color:#555">2025-07-02 16:55</div>
<div class="a" style="left:199px;top:751px;width:1542px;height:36px;background:#fff;border-bottom:1px solid #ebeef5"></div>
<div class="t" style="left:388px;top:762px;width:178px;text-align:center;font-size:12.6px;color:#555">用户运营/品牌直播</div>
<div class="t" style="left:566px;top:762px;width:288px;overflow:hidden;font-size:12.6px;color:#555;display:flex;justify-content:safe center;padding-left:11px">市场活动/直播/线上讲座-2025高光时刻-G5 offer集锦</div>
<div class="t" style="left:855px;top:762px;width:90px;text-align:center;font-size:11.7px;color:#555">38</div>
<div class="t" style="left:946px;top:762px;width:90px;text-align:center;font-size:11.7px;color:#555">32</div>
<div class="t" style="left:1036px;top:762px;width:90px;text-align:center;font-size:10.8px;color:#555">下架</div>
<div class="t" style="left:1124px;top:762px;width:166px;text-align:center;font-size:11.7px;color:#555">2025-01-03 15:53</div>
<div class="t" style="left:1290px;top:762px;width:156px;text-align:center;font-size:11.7px;color:#555">2025-08-26 01:00</div>
<div class="a" style="left:199px;top:787px;width:1542px;height:36px;background:#fafafa;border-bottom:1px solid #ebeef5"></div>
<div class="t" style="left:388px;top:798px;width:178px;text-align:center;font-size:12.6px;color:#555">用户运营/品牌直播</div>
<div class="t" style="left:566px;top:798px;width:288px;overflow:hidden;font-size:12.6px;color:#555;display:flex;justify-content:safe center;padding-left:11px">市场活动/直播/线上讲座-2025高光时刻-G5 offer集锦</div>
<div class="t" style="left:855px;top:798px;width:90px;text-align:center;font-size:11.7px;color:#555">0</div>
<div class="t" style="left:946px;top:798px;width:90px;text-align:center;font-size:11.7px;color:#555">0</div>
<div class="t" style="left:1036px;top:798px;width:90px;text-align:center;font-size:10.8px;color:#555">下架</div>
<div class="t" style="left:1124px;top:798px;width:166px;text-align:center;font-size:11.7px;color:#555">2025-01-01 19:10</div>
<div class="t" style="left:1290px;top:798px;width:156px;text-align:center;font-size:11.7px;color:#555">2025-08-26 01:00</div>
<div class="a" style="left:199px;top:823px;width:1542px;height:36px;background:#fff;border-bottom:1px solid #ebeef5"></div>
<div class="t" style="left:388px;top:834px;width:178px;text-align:center;font-size:12.6px;color:#555">用户运营/小课堂直播</div>
<div class="t" style="left:566px;top:834px;width:288px;overflow:hidden;font-size:12.6px;color:#555;display:flex;justify-content:safe center;padding-left:11px">市场活动/直播/线上讲座-视频号直播-小课堂1分钱</div>
<div class="t" style="left:855px;top:834px;width:90px;text-align:center;font-size:11.7px;color:#555">2</div>
<div class="t" style="left:946px;top:834px;width:90px;text-align:center;font-size:11.7px;color:#555">1</div>
<div class="t" style="left:1036px;top:834px;width:90px;text-align:center;font-size:10.8px;color:#555">下架</div>
<div class="t" style="left:1124px;top:834px;width:166px;text-align:center;font-size:11.7px;color:#555">2024-12-28 12:22</div>
<div class="t" style="left:1290px;top:834px;width:156px;text-align:center;font-size:11.7px;color:#555">2025-08-26 01:00</div>
<div class="a" style="left:199px;top:859px;width:1542px;height:36px;background:#fafafa;border-bottom:1px solid #ebeef5"></div>
<div class="t" style="left:388px;top:870px;width:178px;text-align:center;font-size:12.6px;color:#555">用户运营/小课堂直播</div>
<div class="t" style="left:566px;top:870px;width:288px;overflow:hidden;font-size:12.6px;color:#555;display:flex;justify-content:safe center;padding-left:11px">市场活动/直播/线上讲座-视频号直播-小课堂1分钱</div>
<div class="t" style="left:855px;top:870px;width:90px;text-align:center;font-size:11.7px;color:#555">3</div>
<div class="t" style="left:946px;top:870px;width:90px;text-align:center;font-size:11.7px;color:#555">3</div>
<div class="t" style="left:1036px;top:870px;width:90px;text-align:center;font-size:10.8px;color:#555">下架</div>
<div class="t" style="left:1124px;top:870px;width:166px;text-align:center;font-size:11.7px;color:#555">2024-12-28 11:41</div>
<div class="t" style="left:1290px;top:870px;width:156px;text-align:center;font-size:11.7px;color:#555">2025-08-26 01:00</div>
<div class="a" style="left:199px;top:534px;width:189px;height:36px;background:#fff;border-bottom:1px solid #ebeef5"></div>
<div class="t" style="left:204px;top:544px;width:189px;text-align:center;font-size:10.8px;letter-spacing:-0.2px;color:#3b7cf5;-webkit-text-stroke:0.25px #3b7cf5">2025牛剑大咖私享会</div>
<div class="a" style="left:199px;top:570px;width:189px;height:36px;background:#fafafa;border-bottom:1px solid #ebeef5"></div>
<div class="t" style="left:204px;top:580px;width:189px;text-align:center;font-size:10.8px;letter-spacing:-0.2px;color:#3b7cf5;-webkit-text-stroke:0.25px #3b7cf5">星友会社群线上直播课程</div>
<div class="a" style="left:199px;top:606px;width:189px;height:36px;background:#fff;border-bottom:1px solid #ebeef5"></div>
<div class="t" style="left:204px;top:616px;width:189px;text-align:center;font-size:10.8px;letter-spacing:-0.2px;color:#3b7cf5;-webkit-text-stroke:0.25px #3b7cf5">瑞友会社群线上直播课程</div>
<div class="a" style="left:199px;top:642px;width:189px;height:36px;background:#fafafa;border-bottom:1px solid #ebeef5"></div>
<div class="t" style="left:204px;top:652px;width:189px;text-align:center;font-size:10.8px;letter-spacing:-0.2px;color:#3b7cf5;-webkit-text-stroke:0.25px #3b7cf5">研究生申请线上/线下1V1咨询</div>
<div class="a" style="left:199px;top:678px;width:189px;height:36px;background:#fff;border-bottom:1px solid #ebeef5"></div>
<div class="t" style="left:204px;top:688px;width:189px;text-align:center;font-size:10.8px;letter-spacing:-0.2px;color:#3b7cf5;-webkit-text-stroke:0.25px #3b7cf5"><span style="letter-spacing:-0.35px;margin-left:7px">2025 AS大考备考锦囊「素质教育」</span></div>
<div class="a" style="left:199px;top:714px;width:189px;height:36px;background:#fafafa;border-bottom:1px solid #ebeef5"></div>
<div class="t" style="left:204px;top:724px;width:189px;text-align:center;font-size:10.8px;letter-spacing:-0.2px;color:#3b7cf5;-webkit-text-stroke:0.25px #3b7cf5">2024牛剑升学白皮书</div>
<div class="a" style="left:199px;top:750px;width:189px;height:36px;background:#fff;border-bottom:1px solid #ebeef5"></div>
<div class="t" style="left:204px;top:760px;width:189px;text-align:center;font-size:10.8px;letter-spacing:-0.2px;color:#3b7cf5;-webkit-text-stroke:0.25px #3b7cf5">英本G5留学1V1咨询</div>
<div class="a" style="left:199px;top:786px;width:189px;height:36px;background:#fafafa;border-bottom:1px solid #ebeef5"></div>
<div class="t" style="left:204px;top:796px;width:189px;text-align:center;font-size:10.8px;letter-spacing:-0.2px;color:#3b7cf5;-webkit-text-stroke:0.25px #3b7cf5">英本G5申请手册</div>
<div class="a" style="left:199px;top:822px;width:189px;height:36px;background:#fff;border-bottom:1px solid #ebeef5"></div>
<div class="t" style="left:204px;top:832px;width:189px;text-align:center;font-size:10.8px;letter-spacing:-0.2px;color:#3b7cf5;-webkit-text-stroke:0.25px #3b7cf5">Top10录取者优秀范文</div>
<div class="a" style="left:199px;top:858px;width:189px;height:36px;background:#fafafa;border-bottom:1px solid #ebeef5"></div>
<div class="t" style="left:204px;top:868px;width:189px;text-align:center;font-size:10.8px;letter-spacing:-0.2px;color:#3b7cf5;-webkit-text-stroke:0.25px #3b7cf5">英美双申1v1咨询</div>
<div class="a" style="left:1470px;top:492px;width:271px;height:402px;box-shadow:-6px 0 8px -4px rgba(0,0,0,.10)"></div>
<div class="a" style="left:1470px;top:492px;width:271px;height:42px;background:#f8f8f9;border-top:1px solid #ebeef5"></div>
<div class="t" style="left:1470px;top:508px;width:224px;text-align:center;font-size:10.8px;color:#111;font-weight:bold">操作</div>
<div class="a" style="left:1705px;top:500px;width:25px;height:25px;border:1px solid #dcdfe6;border-radius:50%;background:#fff"></div>
<svg class="a" style="left:1713px;top:509px" width="9" height="8" viewBox="0 0 9 8"><path d="M0 1h9M0 4h9M0 7h9" stroke="#888" stroke-width="0.8"/><path d="M2.5 0v2M6 3v2M3.5 6v2" stroke="#888" stroke-width="0.8"/></svg>
<div class="a" style="left:1470px;top:534px;width:271px;height:36px;background:#fff;border-bottom:1px solid #ebeef5"></div>
<div class="t" style="left:1485px;top:546px;font-size:10.8px;color:#3b7cf5;-webkit-text-stroke:0.2px #3b7cf5">数据详情</div>
<div class="t" style="left:1539px;top:546px;font-size:10.8px;color:#3b7cf5;-webkit-text-stroke:0.2px #3b7cf5">活动配置</div>
<div class="t" style="left:1593px;top:546px;font-size:10.8px;color:#3b7cf5;-webkit-text-stroke:0.2px #3b7cf5">签到配置</div>
<div class="t" style="left:1647px;top:546px;font-size:10.8px;color:#3b7cf5;-webkit-text-stroke:0.2px #3b7cf5">券配置</div>
<div class="a" style="left:1470px;top:570px;width:271px;height:36px;background:#fafafa;border-bottom:1px solid #ebeef5"></div>
<div class="t" style="left:1485px;top:582px;font-size:10.8px;color:#3b7cf5;-webkit-text-stroke:0.2px #3b7cf5">数据详情</div>
<div class="t" style="left:1539px;top:582px;font-size:10.8px;color:#3b7cf5;-webkit-text-stroke:0.2px #3b7cf5">活动配置</div>
<div class="t" style="left:1593px;top:582px;font-size:10.8px;color:#3b7cf5;-webkit-text-stroke:0.2px #3b7cf5">签到配置</div>
<div class="t" style="left:1647px;top:582px;font-size:10.8px;color:#3b7cf5;-webkit-text-stroke:0.2px #3b7cf5">券配置</div>
<div class="a" style="left:1470px;top:606px;width:271px;height:36px;background:#fff;border-bottom:1px solid #ebeef5"></div>
<div class="t" style="left:1485px;top:618px;font-size:10.8px;color:#3b7cf5;-webkit-text-stroke:0.2px #3b7cf5">数据详情</div>
<div class="t" style="left:1539px;top:618px;font-size:10.8px;color:#3b7cf5;-webkit-text-stroke:0.2px #3b7cf5">活动配置</div>
<div class="t" style="left:1593px;top:618px;font-size:10.8px;color:#3b7cf5;-webkit-text-stroke:0.2px #3b7cf5">签到配置</div>
<div class="t" style="left:1647px;top:618px;font-size:10.8px;color:#3b7cf5;-webkit-text-stroke:0.2px #3b7cf5">券配置</div>
<div class="a" style="left:1470px;top:642px;width:271px;height:36px;background:#fafafa;border-bottom:1px solid #ebeef5"></div>
<div class="t" style="left:1485px;top:654px;font-size:10.8px;color:#3b7cf5;-webkit-text-stroke:0.2px #3b7cf5">数据详情</div>
<div class="t" style="left:1539px;top:654px;font-size:10.8px;color:#3b7cf5;-webkit-text-stroke:0.2px #3b7cf5">活动配置</div>
<div class="t" style="left:1593px;top:654px;font-size:10.8px;color:#3b7cf5;-webkit-text-stroke:0.2px #3b7cf5">签到配置</div>
<div class="t" style="left:1647px;top:654px;font-size:10.8px;color:#3b7cf5;-webkit-text-stroke:0.2px #3b7cf5">券配置</div>
<div class="a" style="left:1470px;top:678px;width:271px;height:36px;background:#fff;border-bottom:1px solid #ebeef5"></div>
<div class="t" style="left:1485px;top:690px;font-size:10.8px;color:#3b7cf5;-webkit-text-stroke:0.2px #3b7cf5">数据详情</div>
<div class="t" style="left:1539px;top:690px;font-size:10.8px;color:#3b7cf5;-webkit-text-stroke:0.2px #3b7cf5">活动配置</div>
<div class="t" style="left:1593px;top:690px;font-size:10.8px;color:#3b7cf5;-webkit-text-stroke:0.2px #3b7cf5">签到配置</div>
<div class="t" style="left:1647px;top:690px;font-size:10.8px;color:#3b7cf5;-webkit-text-stroke:0.2px #3b7cf5">券配置</div>
<div class="a" style="left:1470px;top:714px;width:271px;height:36px;background:#fafafa;border-bottom:1px solid #ebeef5"></div>
<div class="t" style="left:1485px;top:726px;font-size:10.8px;color:#3b7cf5;-webkit-text-stroke:0.2px #3b7cf5">数据详情</div>
<div class="t" style="left:1539px;top:726px;font-size:10.8px;color:#3b7cf5;-webkit-text-stroke:0.2px #3b7cf5">活动配置</div>
<div class="t" style="left:1593px;top:726px;font-size:10.8px;color:#3b7cf5;-webkit-text-stroke:0.2px #3b7cf5">签到配置</div>
<div class="t" style="left:1647px;top:726px;font-size:10.8px;color:#3b7cf5;-webkit-text-stroke:0.2px #3b7cf5">券配置</div>
<div class="a" style="left:1470px;top:750px;width:271px;height:36px;background:#fff;border-bottom:1px solid #ebeef5"></div>
<div class="t" style="left:1485px;top:762px;font-size:10.8px;color:#3b7cf5;-webkit-text-stroke:0.2px #3b7cf5">数据详情</div>
<div class="t" style="left:1539px;top:762px;font-size:10.8px;color:#3b7cf5;-webkit-text-stroke:0.2px #3b7cf5">活动配置</div>
<div class="t" style="left:1593px;top:762px;font-size:10.8px;color:#3b7cf5;-webkit-text-stroke:0.2px #3b7cf5">签到配置</div>
<div class="t" style="left:1647px;top:762px;font-size:10.8px;color:#3b7cf5;-webkit-text-stroke:0.2px #3b7cf5">券配置</div>
<div class="a" style="left:1470px;top:786px;width:271px;height:36px;background:#fafafa;border-bottom:1px solid #ebeef5"></div>
<div class="t" style="left:1485px;top:798px;font-size:10.8px;color:#3b7cf5;-webkit-text-stroke:0.2px #3b7cf5">数据详情</div>
<div class="t" style="left:1539px;top:798px;font-size:10.8px;color:#3b7cf5;-webkit-text-stroke:0.2px #3b7cf5">活动配置</div>
<div class="t" style="left:1593px;top:798px;font-size:10.8px;color:#3b7cf5;-webkit-text-stroke:0.2px #3b7cf5">签到配置</div>
<div class="t" style="left:1647px;top:798px;font-size:10.8px;color:#3b7cf5;-webkit-text-stroke:0.2px #3b7cf5">券配置</div>
<div class="a" style="left:1470px;top:822px;width:271px;height:36px;background:#fff;border-bottom:1px solid #ebeef5"></div>
<div class="t" style="left:1485px;top:834px;font-size:10.8px;color:#3b7cf5;-webkit-text-stroke:0.2px #3b7cf5">数据详情</div>
<div class="t" style="left:1539px;top:834px;font-size:10.8px;color:#3b7cf5;-webkit-text-stroke:0.2px #3b7cf5">活动配置</div>
<div class="t" style="left:1593px;top:834px;font-size:10.8px;color:#3b7cf5;-webkit-text-stroke:0.2px #3b7cf5">签到配置</div>
<div class="t" style="left:1647px;top:834px;font-size:10.8px;color:#3b7cf5;-webkit-text-stroke:0.2px #3b7cf5">券配置</div>
<div class="a" style="left:1470px;top:858px;width:271px;height:36px;background:#fafafa;border-bottom:1px solid #ebeef5"></div>
<div class="t" style="left:1485px;top:870px;font-size:10.8px;color:#3b7cf5;-webkit-text-stroke:0.2px #3b7cf5">数据详情</div>
<div class="t" style="left:1539px;top:870px;font-size:10.8px;color:#3b7cf5;-webkit-text-stroke:0.2px #3b7cf5">活动配置</div>
<div class="t" style="left:1593px;top:870px;font-size:10.8px;color:#3b7cf5;-webkit-text-stroke:0.2px #3b7cf5">签到配置</div>
<div class="t" style="left:1647px;top:870px;font-size:10.8px;color:#3b7cf5;-webkit-text-stroke:0.2px #3b7cf5">券配置</div>
<div class="a" style="left:1740px;top:492px;width:1px;height:402px;background:#ebeef5"></div>
<div class="a" style="left:199px;top:891px;width:1542px;height:6px;background:#eef0f3"></div>
<div class="a" style="left:199px;top:891px;width:1411px;height:6px;background:#c5ced9;border-radius:3px"></div>
<div class="a" style="left:1108px;top:912px;width:27px;height:25px;border-radius:2px;background:#f4f4f5;color:#444;font-size:11.7px;font-weight:bold;line-height:25px;text-align:center"><svg width="7" height="10" viewBox="0 0 7 10" style="margin-top:7px"><path d="M5.5 1L1.5 5l4 4" stroke="#c0c4cc" stroke-width="1.1" fill="none"/></svg></div>
<div class="a" style="left:1144px;top:912px;width:27px;height:25px;border-radius:2px;background:#3b82f6;color:#fff;font-size:11.7px;font-weight:bold;line-height:25px;text-align:center">1</div>
<div class="a" style="left:1180px;top:912px;width:27px;height:25px;border-radius:2px;background:#f4f4f5;color:#444;font-size:11.7px;font-weight:bold;line-height:25px;text-align:center">2</div>
<div class="a" style="left:1216px;top:912px;width:27px;height:25px;border-radius:2px;background:#f4f4f5;color:#444;font-size:11.7px;font-weight:bold;line-height:25px;text-align:center">3</div>
<div class="a" style="left:1252px;top:912px;width:27px;height:25px;border-radius:2px;background:#f4f4f5;color:#444;font-size:11.7px;font-weight:bold;line-height:25px;text-align:center">4</div>
<div class="a" style="left:1288px;top:912px;width:27px;height:25px;border-radius:2px;background:#f4f4f5;color:#444;font-size:11.7px;font-weight:bold;line-height:25px;text-align:center">5</div>
<div class="a" style="left:1324px;top:912px;width:27px;height:25px;border-radius:2px;background:#f4f4f5;color:#444;font-size:11.7px;font-weight:bold;line-height:25px;text-align:center">6</div>
<div class="a" style="left:1360px;top:912px;width:27px;height:25px;border-radius:2px;background:#f4f4f5;color:#444;font-size:11.7px;font-weight:bold;line-height:25px;text-align:center">···</div>
<div class="a" style="left:1396px;top:912px;width:27px;height:25px;border-radius:2px;background:#f4f4f5;color:#444;font-size:11.7px;font-weight:bold;line-height:25px;text-align:center">26</div>
<div class="a" style="left:1432px;top:912px;width:27px;height:25px;border-radius:2px;background:#f4f4f5;color:#444;font-size:11.7px;font-weight:bold;line-height:25px;text-align:center"><svg width="7" height="10" viewBox="0 0 7 10" style="margin-top:7px"><path d="M1.5 1l4 4-4 4" stroke="#555" stroke-width="1.1" fill="none"/></svg></div>
<div class="a" style="left:1468px;top:913px;width:90px;height:25px;border:1px solid #dcdfe6;border-radius:3px;background:#fff"></div>
<div class="t" style="left:1484px;top:919px;font-size:11.7px;color:#555">10条/页</div>
<svg class="a" style="left:1542px;top:922px" width="9" height="6" viewBox="0 0 9 6"><path d="M0.5 0.8l4 4 4-4" stroke="#b0b4bc" stroke-width="1" fill="none"/></svg>
<div class="t" style="left:1572px;top:919px;font-size:11.7px;color:#555">共 257 条</div>
<div class="t" style="left:1653px;top:919px;font-size:11.7px;color:#555">前往</div>
<div class="a" style="left:1680px;top:913px;width:41px;height:25px;border:1px solid #dcdfe6;border-radius:3px;background:#fff;font-size:11.7px;color:#555;line-height:23px;text-align:center">1</div>
<div class="t" style="left:1725px;top:919px;font-size:11.7px;color:#555">页</div>
<div class="a" style="left:0;top:121px;width:1px;height:854px;background:rgba(255,255,255,.14)"></div>
<div class="a" style="left:1766px;top:969px;width:12px;height:12px;background:radial-gradient(circle at 0 0,transparent 11.5px,#2f6f8f 12.5px)"></div>
<div class="a" style="left:0;top:969px;width:12px;height:12px;background:radial-gradient(circle at 100% 0,transparent 11.5px,#3a7f98 12.5px)"></div>
<div class="a" style="left:0;top:0;width:10px;height:10px;background:radial-gradient(circle at 100% 100%,transparent 9.5px,#b9c4c9 10.5px)"></div>
<div class="a" style="left:1768px;top:0;width:10px;height:10px;background:radial-gradient(circle at 0 100%,transparent 9.5px,#b9c4c9 10.5px)"></div>
</body></html>
